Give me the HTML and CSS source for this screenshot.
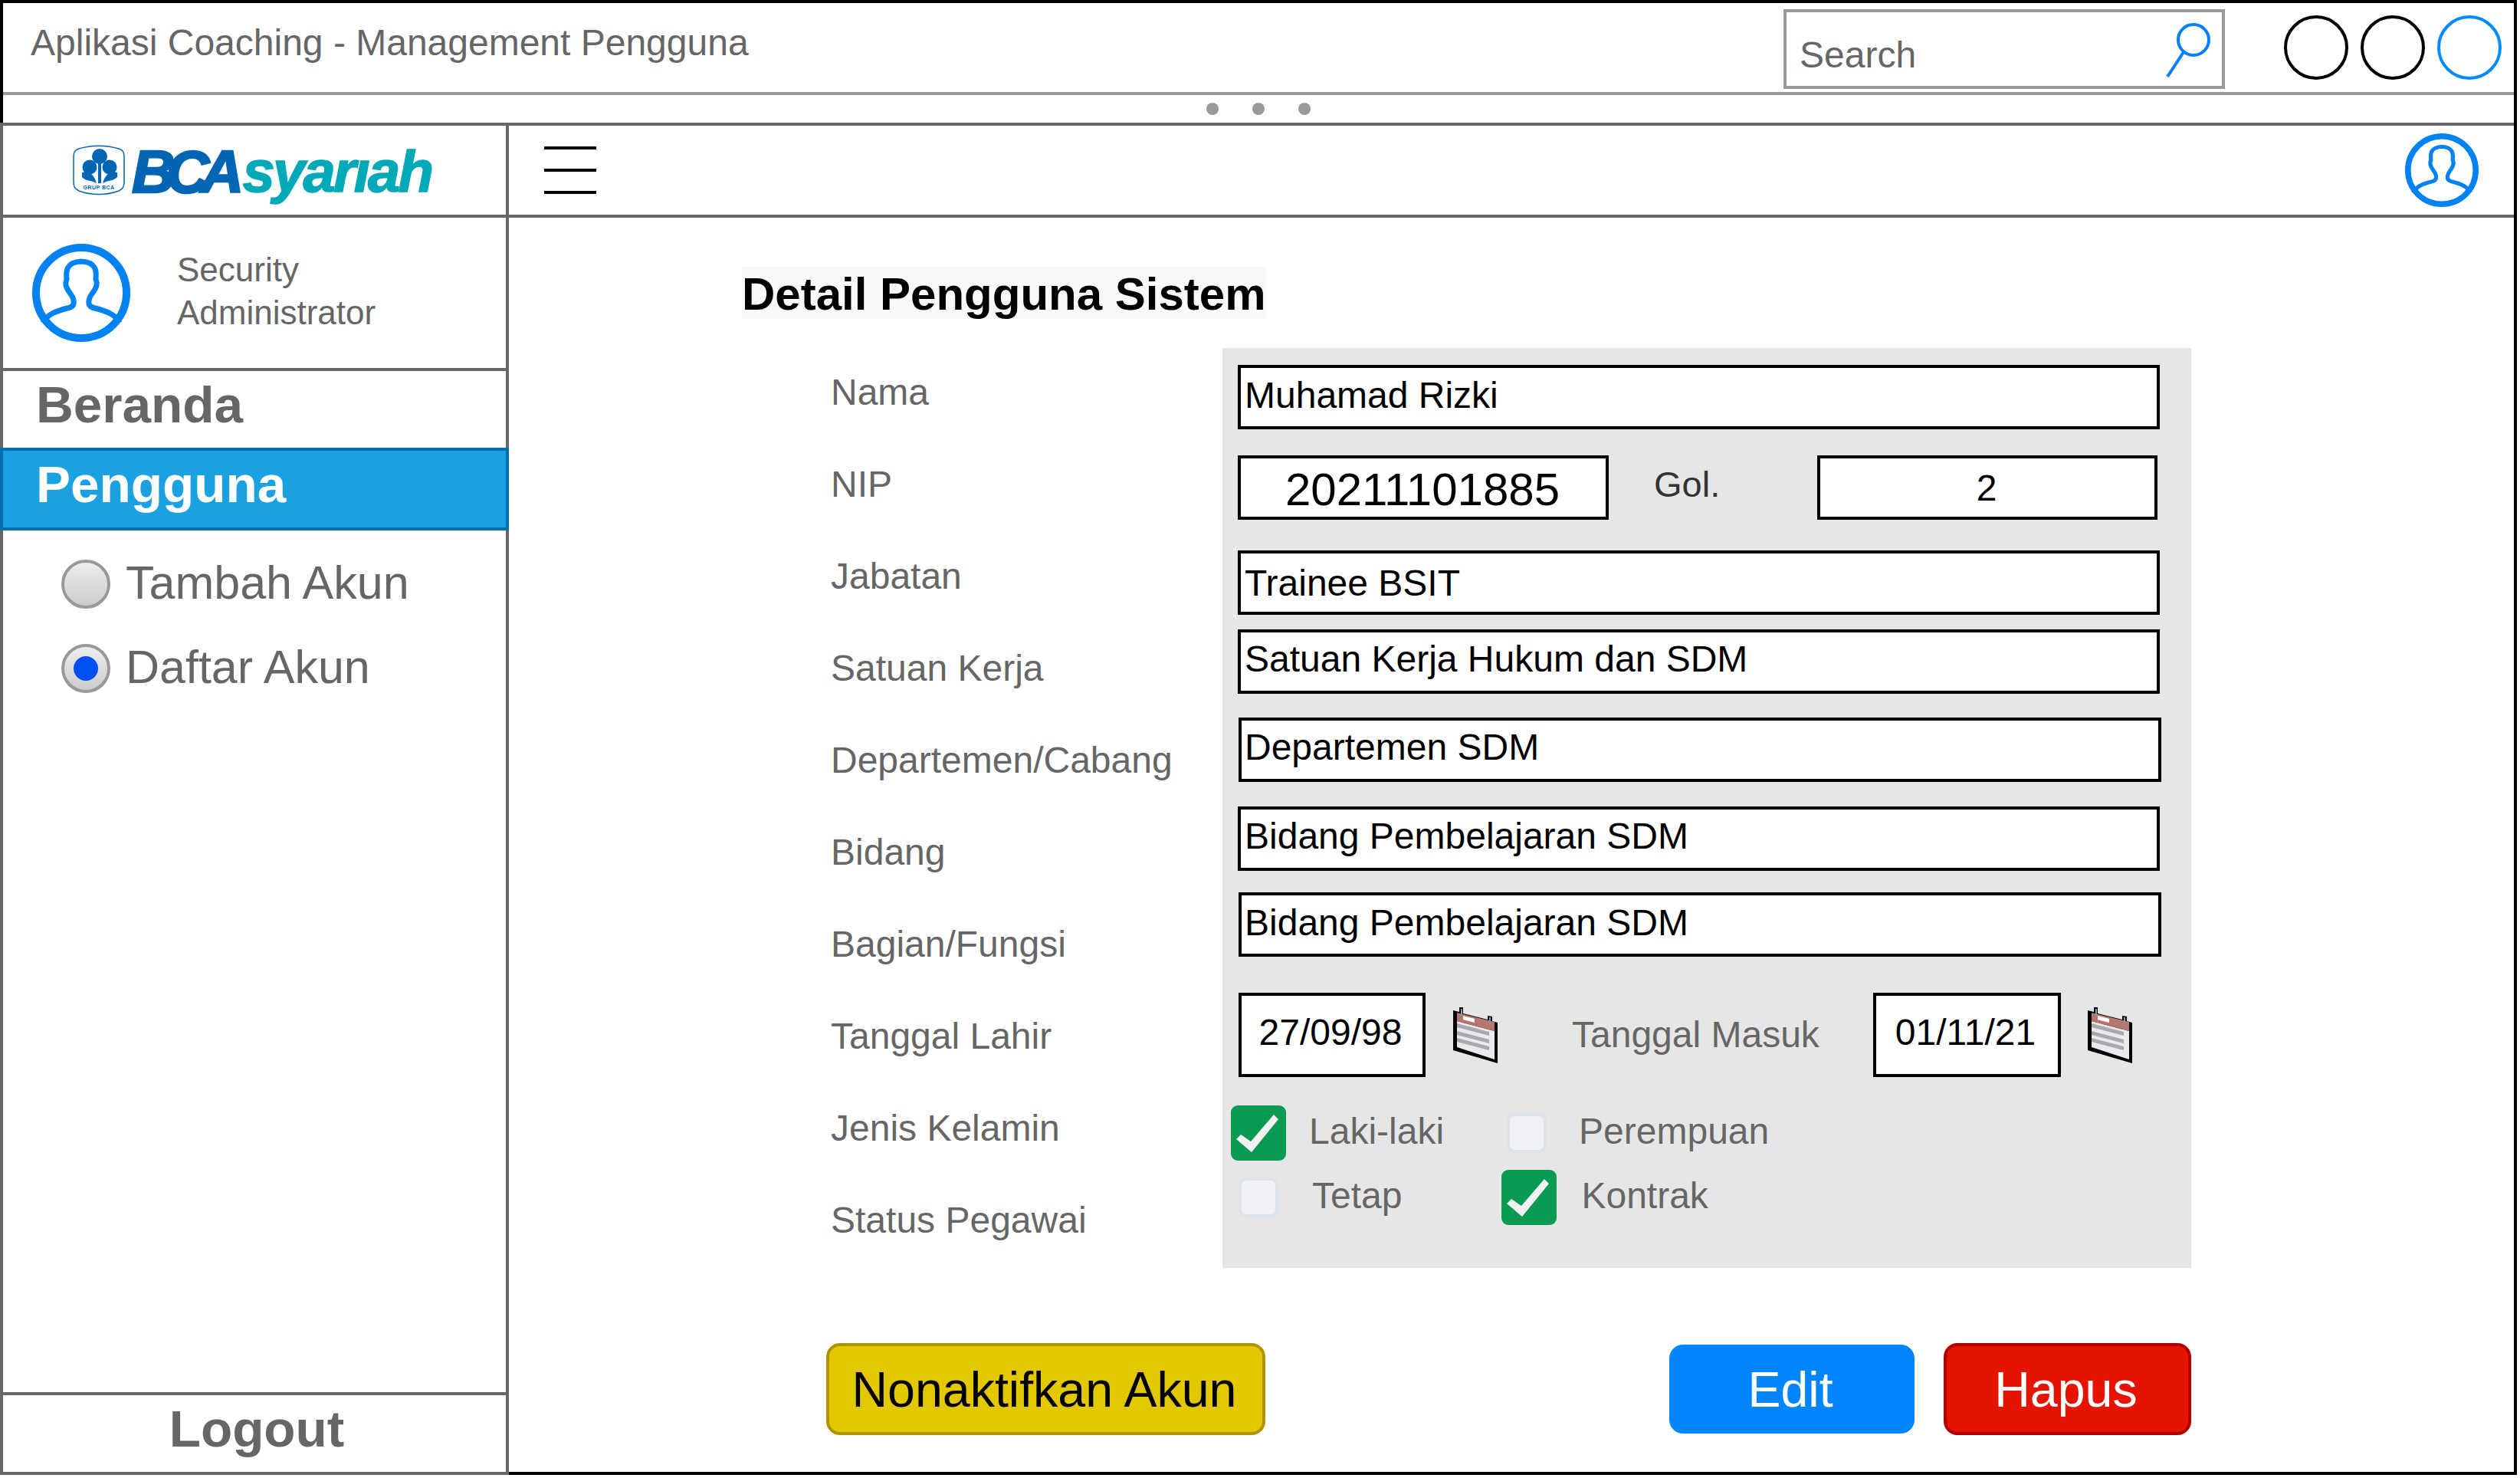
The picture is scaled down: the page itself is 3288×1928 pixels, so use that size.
FILE: index.html
```html
<!DOCTYPE html>
<html lang="id">
<head>
	<meta charset="UTF-8">
	<title>Aplikasi Coaching - Management Pengguna</title>
	<link rel="stylesheet" href="styles.css">
</head>
<body>
<svg class="defs" width="0" height="0">
	<symbol id="person" viewBox="0 0 128 128">
		<circle cx="64" cy="64" r="59" fill="none" stroke="currentColor" stroke-width="10"/>
		<path d="M14 103C20 91 34 87 46 84C52 83 55 80 54 74C53 66 46 63 44 54C43 50 45 48 45 46C44 36 44 24 64 23C84 24 84 36 83 46C83 48 85 50 84 54C82 63 75 66 74 74C73 80 76 83 82 84C94 87 108 91 114 103" fill="none" stroke="currentColor" stroke-width="7"/>
	</symbol>
	<symbol id="calendar" viewBox="0 0 60 76">
		<path d="M1 6L9 8V2L14 2V10L46 18V13L52 14V20L59 22V75L1 58Z" fill="#000"/>
		<path d="M6 20L55 33V70L6 54Z" fill="#e9eaf0"/>
		<path d="M6 9L55 21V33L6 20Z" fill="#b5766d"/>
		<path d="M14 13L29 17V22L14 18Z" fill="#fff"/>
		<path d="M6 23L48 34V39L6 28ZM6 33L48 44V49L6 38ZM6 42L48 53V58L6 47Z" fill="#a9a9a9"/>
		<path d="M11 4H13V13H11ZM48 15H50V24H48Z" fill="#8b97a8"/>
	</symbol>
	<symbol id="check" viewBox="0 0 72 72">
		<rect width="72" height="72" rx="9" fill="#0a9b52"/>
		<path d="M7 44L13 38L26 47L56 12L62 18L27 61Z" fill="#f1f1f3"/>
	</symbol>
</svg>

<div class="window">
	<div class="chrome">
		<div class="titlebar">
			<div class="app-title">Aplikasi Coaching - Management Pengguna</div>
			<div class="search">
				<span>Search</span>
				<svg class="search-icon" width="60" height="72" viewBox="0 0 60 72">
					<ellipse cx="37" cy="22" rx="20" ry="20" fill="none" stroke="#007fff" stroke-width="4"/>
					<path d="M24 38L3 70" stroke="#007fff" stroke-width="4" fill="none"/>
				</svg>
			</div>
			<div class="win-buttons">
				<i class="win-btn"></i>
				<i class="win-btn"></i>
				<i class="win-btn win-btn-blue"></i>
			</div>
		</div>
		<div class="dots"><i></i><i></i><i></i></div>
	</div>

	<div class="shell">
		<aside class="sidebar">
			<div class="brand">
				<svg class="emblem" width="68" height="66" viewBox="0 0 68 66">
					<path d="M8 5C24 0 44 0 60 5C66 7 67 10 67 16V48C67 54 66 57 60 60C44 66 24 66 8 60C2 57 1 54 1 48V16C1 10 2 7 8 5Z" fill="#fff" stroke="#0066b3" stroke-width="1.5"/>
					<circle cx="35" cy="15" r="10" fill="#0066b3"/>
					<circle cx="22" cy="29" r="9.5" fill="#0066b3"/>
					<circle cx="48" cy="29" r="9.5" fill="#0066b3"/>
					<path d="M12 36C20 33 28 38 31 50C24 46 16 47 12 42ZM58 36C50 33 42 38 39 50C46 46 54 47 58 42Z" fill="#0066b3"/>
					<path d="M33 24H37V50H33Z" fill="#0066b3"/>
					<text class="emblem-text" x="34" y="58" text-anchor="middle">GRUP BCA</text>
				</svg>
				<span class="brand-bca">BCA</span><span class="brand-syariah">syarıah</span>
			</div>
			<div class="profile">
				<svg class="avatar-lg"><use href="#person"/></svg>
				<div class="profile-name">Security<br>Administrator</div>
			</div>
			<div class="nav-item">Beranda</div>
			<div class="nav-item nav-item-active">Pengguna</div>
			<div class="submenu">
				<div class="sub-item"><i class="radio"></i><span>Tambah Akun</span></div>
				<div class="sub-item"><i class="radio radio-on"></i><span>Daftar Akun</span></div>
			</div>
			<div class="logout">Logout</div>
		</aside>

		<main class="main">
			<div class="appbar">
				<div class="burger"><i></i><i></i><i></i></div>
				<svg class="avatar-sm"><use href="#person"/></svg>
			</div>
			<div class="content">
				<h1 class="page-title">Detail Pengguna Sistem</h1>
				<div class="form">
					<div class="labels">
						<div>Nama</div>
						<div>NIP</div>
						<div>Jabatan</div>
						<div>Satuan Kerja</div>
						<div>Departemen/Cabang</div>
						<div>Bidang</div>
						<div>Bagian/Fungsi</div>
						<div>Tanggal Lahir</div>
						<div>Jenis Kelamin</div>
						<div>Status Pegawai</div>
					</div>
					<div class="panel">
						<div class="field f-nama">Muhamad Rizki</div>
						<div class="nip-row">
							<div class="field f-nip">20211101885</div>
							<div class="gol">Gol.</div>
							<div class="field f-gol">2</div>
						</div>
						<div class="field f-jabatan">Trainee BSIT</div>
						<div class="field f-satuan">Satuan Kerja Hukum dan SDM</div>
						<div class="field f-dept">Departemen SDM</div>
						<div class="field f-bidang">Bidang Pembelajaran SDM</div>
						<div class="field f-bagian">Bidang Pembelajaran SDM</div>
						<div class="date-row">
							<div class="field f-date">27/09/98</div>
							<svg class="cal"><use href="#calendar"/></svg>
							<div class="date-label">Tanggal Masuk</div>
							<div class="field f-date f-date2">01/11/21</div>
							<svg class="cal cal2"><use href="#calendar"/></svg>
						</div>
						<div class="check-row">
							<svg class="cb-on"><use href="#check"/></svg>
							<span class="cb-text t-laki">Laki-laki</span>
							<i class="cb-off off-pr"></i>
							<span class="cb-text t-pr">Perempuan</span>
						</div>
						<div class="check-row check-row2">
							<i class="cb-off off-tetap"></i>
							<span class="cb-text t-tetap">Tetap</span>
							<svg class="cb-on on-kontrak"><use href="#check"/></svg>
							<span class="cb-text t-kontrak">Kontrak</span>
						</div>
					</div>
				</div>
				<div class="actions">
					<div class="btn btn-yellow">Nonaktifkan Akun</div>
					<div class="btn btn-blue">Edit</div>
					<div class="btn btn-red">Hapus</div>
				</div>
			</div>
		</main>
	</div>
</div>
</body>
</html>
```

FILE: styles.css
```css
html,body{
	margin: 0;
	padding: 0;
	background-color: #fff;
	font-family: "Liberation Sans", Arial, sans-serif;
}
i{
	display: block;
	font-style: normal;
}
.defs{
	position: absolute;
}
.window{
	box-sizing: border-box;
	width: 3284px;
	height: 1924px;
	display: flex;
	flex-direction: column;
	border-top: 4px solid #000;
	border-right: 4px solid #000;
}

/* window title + dots */
.chrome{
	border-left: 4px solid #000;
}
.titlebar{
	box-sizing: border-box;
	height: 120px;
	display: flex;
	align-items: flex-start;
	padding-right: 16px;
	border-bottom: 4px solid #999;
}
.app-title{
	padding: 24px 0 0 36px;
	font-size: 48px;
	line-height: 56px;
	color: #666;
}
.search{
	box-sizing: border-box;
	width: 576px;
	height: 104px;
	margin: 8px 0 0 auto;
	padding-left: 17px;
	display: flex;
	border: 4px solid #999;
	font-size: 48px;
	line-height: 56px;
	color: #666;
}
.search span{
	padding-top: 28px;
}
.search-icon{
	margin: 14px 14px 0 auto;
}
.win-buttons{
	display: flex;
	gap: 16px;
	margin: 16px 0 0 77px;
}
.win-btn{
	box-sizing: border-box;
	width: 84px;
	height: 84px;
	border: 4px solid #000;
	border-radius: 50%;
}
.win-btn-blue{
	border-color: #008cff;
}
.dots{
	height: 36px;
	display: flex;
	align-items: center;
	justify-content: center;
	gap: 44px;
	box-sizing: border-box;
}
.dots i{
	width: 16px;
	height: 16px;
	border-radius: 50%;
	background-color: #999;
}

/* sidebar */
.shell{
	flex: 1;
	display: flex;
	min-height: 0;
}
.sidebar{
	box-sizing: border-box;
	width: 664px;
	flex-shrink: 0;
	display: flex;
	flex-direction: column;
	border-left: 4px solid #666;
	border-right: 4px solid #666;
	border-bottom: 4px solid #666;
}
.brand{
	box-sizing: border-box;
	height: 124px;
	display: flex;
	align-items: center;
	margin: 0 -4px;
	padding-left: 95px;
	border-top: 4px solid #666;
	border-bottom: 4px solid #666;
	font-weight: bold;
	font-style: italic;
	line-height: 80px;
}
.emblem{
	flex-shrink: 0;
	margin-right: 9px;
}
.emblem-text{
	font-size: 7px;
	font-style: normal;
	font-weight: bold;
	letter-spacing: .5px;
	fill: #0066b3;
}
.brand-bca{
	margin-top: 4px;
	font-size: 78px;
	letter-spacing: -11.5px;
	color: #0066b3;
	-webkit-text-stroke: 2.5px #0066b3;
}
.brand-syariah{
	margin: 4px 0 0 10px;
	font-size: 76px;
	letter-spacing: -2.8px;
	color: #00a9b7;
	-webkit-text-stroke: 1.5px #00a9b7;
}
.profile{
	box-sizing: border-box;
	height: 200px;
	display: flex;
	align-items: center;
	border-bottom: 4px solid #666;
}
.avatar-lg{
	width: 128px;
	height: 128px;
	margin-left: 38px;
	color: #0082f0;
}
.profile-name{
	margin: 0 0 4px 61px;
	font-size: 44px;
	line-height: 56px;
	color: #666;
}
.nav-item{
	box-sizing: border-box;
	height: 100px;
	display: flex;
	align-items: center;
	padding: 0 0 13px 43px;
	font-size: 67.5px;
	font-weight: bold;
	color: #666;
}
.nav-item-active{
	height: 108px;
	margin: 0 -4px;
	padding: 0 0 13px 43px;
	border: 4px solid #006eaf;
	background-color: #1ba1e2;
	color: #fff;
}
.submenu{
	flex: 1;
	display: flex;
	flex-direction: column;
	gap: 46px;
	padding: 38px 0 0 76px;
}
.sub-item{
	height: 64px;
	display: flex;
	align-items: center;
	gap: 20px;
	font-size: 61px;
	line-height: 60px;
	color: #666;
}
.sub-item span{
	padding-bottom: 4px;
}
.radio{
	box-sizing: border-box;
	width: 64px;
	height: 64px;
	display: flex;
	align-items: center;
	justify-content: center;
	border: 4px solid #999;
	border-radius: 50%;
	background: linear-gradient(#eee, #ccc);
}
.radio-on::after{
	content: "";
	width: 32px;
	height: 32px;
	border-radius: 50%;
	background-color: #0050ef;
}
.logout{
	box-sizing: border-box;
	height: 104px;
	display: flex;
	align-items: center;
	justify-content: center;
	padding: 0 0 14px 6px;
	border-top: 4px solid #666;
	font-size: 67.5px;
	font-weight: bold;
	color: #666;
}

/* main */
.main{
	flex: 1;
	display: flex;
	flex-direction: column;
	border-bottom: 4px solid #000;
}
.appbar{
	box-sizing: border-box;
	height: 124px;
	display: flex;
	align-items: center;
	justify-content: space-between;
	padding: 0 46px;
	border-top: 4px solid #666;
	border-bottom: 4px solid #666;
}
.burger{
	width: 68px;
	display: flex;
	flex-direction: column;
	gap: 25px;
}
.burger i{
	height: 4px;
	background-color: #000;
}
.avatar-sm{
	width: 96px;
	height: 96px;
	color: #0082f0;
}
.content{
	padding: 64px 0 0 304px;
}
.page-title{
	display: inline-block;
	margin: 0;
	padding: 3px 0 0 0;
	background-color: #f8f9fa;
	font-size: 60px;
	line-height: 65px;
	font-weight: bold;
	color: #000;
	vertical-align: top;
}
.form{
	display: flex;
	margin: 36px 0 0 116px;
}
.labels{
	width: 511px;
	font-size: 48px;
	line-height: 120px;
	color: #666;
}
.panel{
	box-sizing: border-box;
	width: 1264px;
	height: 1200px;
	margin-top: 2px;
	padding-top: 22px;
	background-color: #e6e6e6;
}
.field{
	box-sizing: border-box;
	width: 1203px;
	height: 84px;
	margin-left: 20px;
	padding: 0 0 8px 5px;
	display: flex;
	align-items: center;
	border: 4px solid #000;
	background-color: #fff;
	font-size: 48px;
	color: #000;
}
.f-nama{
	padding-bottom: 5px;
}
.nip-row{
	display: flex;
	margin-top: 34px;
}
.f-nip{
	width: 484px;
	padding: 4px 2px 0 0;
	justify-content: center;
	font-size: 60px;
}
.gol{
	width: 213px;
	margin-left: 59px;
	font-size: 47px;
	line-height: 75px;
	color: #333;
}
.f-gol{
	width: 444px;
	margin-left: 0;
	padding: 0 2px 0 0;
	justify-content: center;
}
.f-jabatan{
	margin-top: 40px;
	padding-bottom: 0;
}
.f-satuan{
	margin-top: 19px;
}
.f-dept{
	width: 1204px;
	margin: 31px 0 0 21px;
	padding-left: 4px;
}
.f-bidang{
	margin-top: 32px;
}
.f-bagian{
	width: 1204px;
	margin: 28px 0 0 21px;
	padding: 0 0 5px 4px;
}
.date-row{
	display: flex;
	margin-top: 47px;
}
.f-date{
	width: 244px;
	height: 110px;
	margin-left: 21px;
	padding: 0 4px 8px 0;
	justify-content: center;
}
.f-date2{
	width: 245px;
	margin-left: 0;
}
.cal{
	width: 60px;
	height: 76px;
	margin: 17px 0 0 35px;
}
.cal2{
	margin-left: 34px;
}
.date-label{
	width: 393px;
	margin-left: 96px;
	font-size: 48px;
	line-height: 110px;
	color: #666;
}
.check-row{
	height: 72px;
	margin-top: 37px;
	display: flex;
	align-items: center;
}
.check-row2{
	margin-top: 12px;
}
.cb-on{
	width: 72px;
	height: 72px;
	margin-left: 11px;
}
.cb-off{
	box-sizing: border-box;
	width: 52px;
	height: 52px;
	border: 4px solid #dee3ea;
	border-radius: 10px;
	background-color: #eff1f5;
}
.cb-text{
	padding-bottom: 5px;
	font-size: 48px;
	color: #666;
}
.t-laki{
	margin-left: 30px;
}
.off-pr{
	margin-left: 82px;
}
.t-pr{
	margin-left: 42px;
}
.off-tetap{
	margin-left: 21px;
}
.t-tetap{
	margin-left: 44px;
}
.on-kontrak{
	margin-left: 130px;
}
.t-kontrak{
	margin-left: 32px;
}
.actions{
	display: flex;
	align-items: center;
	margin: 98px 0 0 110px;
}
.btn{
	box-sizing: border-box;
	display: flex;
	align-items: center;
	justify-content: center;
	height: 120px;
	padding: 2px 4px 0 0;
	border-radius: 18px;
	font-size: 64.5px;
	color: #fff;
}
.btn-yellow{
	width: 573px;
	border: 4px solid #b09500;
	background-color: #e3c800;
	color: #000;
}
.btn-blue{
	width: 320px;
	height: 116px;
	margin-left: 527px;
	background-color: #0085ff;
}
.btn-red{
	width: 323px;
	margin-left: 38px;
	border: 4px solid #b20000;
	background-color: #e51400;
}
```
